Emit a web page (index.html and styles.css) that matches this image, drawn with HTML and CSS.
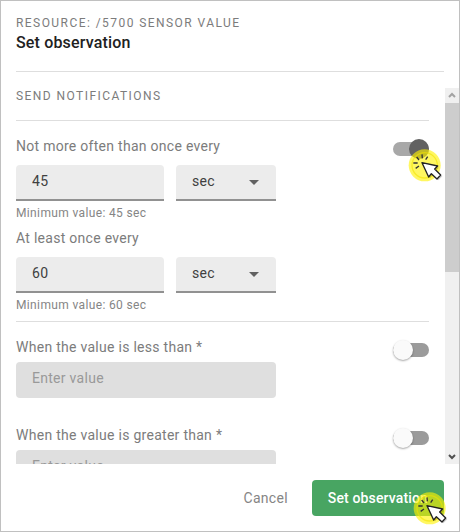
FILE: index.html
```
<!DOCTYPE html>
<html lang="en">
<head>
<meta charset="utf-8">
<meta name="viewport" content="width=device-width, initial-scale=1">
<title>Set observation</title>
<link rel="stylesheet" href="styles.css">
</head>
<body>
<svg class="symbols" aria-hidden="true">
  <symbol id="click" viewBox="21 21 120 120">
    <circle cx="74" cy="76" r="48" fill="#fff200" fill-opacity=".62"/>
    <circle cx="74" cy="76" r="38" fill="none" stroke="#f2e200" stroke-opacity=".6" stroke-width="4"/>
    <path d="M66 43l1 12M50 51l7 9M83 50l-6 9M40 69h13M47 85l10-7" fill="none" stroke="#333" stroke-width="4"/>
    <path d="M70 73L117 83L108 91L127 109L115 121L98 105L90 115Z" fill="#000" fill-opacity=".18"/>
    <path d="M66 68L113 78L104 87L122 105L111 117L94 101L86 111Z" fill="#fff" stroke="#222" stroke-width="4" stroke-linejoin="round"/>
  </symbol>
</svg>
<main class="dialog">
  <header class="header">
    <p class="overline">RESOURCE: /5700 SENSOR VALUE</p>
    <h1 class="title">Set observation</h1>
  </header>
  <div class="viewport">
    <form class="content" id="observation">
      <h2 class="overline section-title">SEND NOTIFICATIONS</h2>
      <section class="section timing">
        <div class="fields">
          <div class="group">
            <label class="label" for="min">Not more often than once every</label>
            <div class="inputs">
              <input class="control" id="min" type="text" value="45">
              <div class="select-box">
                <select class="control" aria-label="Minimum period unit"><option>sec</option><option>min</option></select>
              </div>
            </div>
            <p class="hint">Minimum value: 45 sec</p>
          </div>
          <div class="group">
            <label class="label" for="max">At least once every</label>
            <div class="inputs">
              <input class="control" id="max" type="text" value="60">
              <div class="select-box">
                <select class="control" aria-label="Maximum period unit"><option>sec</option><option>min</option></select>
              </div>
            </div>
            <p class="hint">Minimum value: 60 sec</p>
          </div>
        </div>
        <div class="toggle">
          <input class="switch" type="checkbox" checked aria-label="Limit notification frequency">
          <svg class="pointer toggle-pointer" aria-hidden="true"><use href="#click"/></svg>
        </div>
      </section>
      <section class="section conditions">
        <div class="condition">
          <div class="fields">
            <label class="label" for="less">When the value is less than *</label>
            <input class="control" id="less" type="text" placeholder="Enter value" disabled>
          </div>
          <div class="toggle"><input class="switch" type="checkbox" aria-label="Notify below value"></div>
        </div>
        <div class="condition">
          <div class="fields">
            <label class="label" for="greater">When the value is greater than *</label>
            <input class="control" id="greater" type="text" placeholder="Enter value" disabled>
          </div>
          <div class="toggle"><input class="switch" type="checkbox" aria-label="Notify above value"></div>
        </div>
      </section>
    </form>
    <div class="scrollbar" aria-hidden="true">
      <svg class="arrow up" viewBox="0 0 14 15"><path d="M4 9l3-3 3 3"/></svg>
      <div class="thumb"></div>
      <svg class="arrow down" viewBox="0 0 14 15"><path d="M4 6l3 3 3-3"/></svg>
    </div>
  </div>
  <footer class="footer">
    <button class="button cancel" type="button">Cancel</button>
    <button class="button primary" type="submit" form="observation">Set observation<svg class="pointer button-pointer" aria-hidden="true"><use href="#click"/></svg></button>
  </footer>
</main>
</body>
</html>
```
FILE: styles.css
```
* {
  box-sizing: border-box;
}

body {
  margin: 0;
  background: #fff;
  color: #7c7c7c;
  font: 14px/22px Roboto, sans-serif;
  letter-spacing: 0.02em;
}

h1, h2, p {
  margin: 0;
}

.symbols {
  position: absolute;
  width: 0;
  height: 0;
}

.dialog {
  display: flex;
  flex-direction: column;
  height: 100vh;
  border: 1px solid #c0c0c0;
}

.header {
  margin: 0 15px 16px;
  padding: 14px 0 16px;
  border-bottom: 1px solid #dedede;
}

.overline {
  font-size: 12px;
  font-weight: 400;
  line-height: 16px;
  letter-spacing: 0.12em;
}

.title {
  color: #212121;
  font-size: 16px;
  font-weight: 500;
  line-height: 24px;
  letter-spacing: 0.01em;
}

.viewport {
  display: flex;
  flex: 1;
  min-height: 0;
}

.content {
  flex: 1;
  padding: 0 16px 0 15px;
  overflow: hidden;
}

.section-title {
  padding-bottom: 16px;
}

.section {
  border-top: 1px solid #dedede;
}

.timing,
.condition {
  display: flex;
  justify-content: space-between;
}

.timing {
  padding: 14px 0 8px;
}

.conditions {
  display: grid;
  gap: 26px;
  padding: 14px 0;
}

.fields {
  width: 260px;
}

.group + .group {
  margin-top: 6px;
}

.label {
  display: block;
}

.inputs {
  display: grid;
  grid-template-columns: 1fr 100px;
  gap: 12px;
  margin: 8px 0 4px;
}

.control {
  display: block;
  width: 100%;
  height: 36px;
  padding: 0 16px 2px;
  border: 0;
  border-bottom: 2px solid #919191;
  border-radius: 4px 4px 0 0;
  background: #ececec;
  color: #404040;
  font: inherit;
  letter-spacing: inherit;
  appearance: none;
}

.control:disabled {
  margin-top: 4px;
  border-color: transparent;
  border-radius: 4px;
  background: #dfdfdf;
}

.control::placeholder {
  color: #999;
}

.select-box {
  position: relative;
}

.select-box::after {
  content: "";
  position: absolute;
  top: 15px;
  right: 17px;
  border: 5px solid transparent;
  border-top-color: #616161;
  border-bottom: 0;
  pointer-events: none;
}

.hint {
  color: #858585;
  font-size: 12px;
  line-height: 16px;
  letter-spacing: 0.03em;
}

.toggle {
  position: relative;
  padding-top: 4px;
}

.switch {
  display: block;
  position: relative;
  width: 36px;
  height: 20px;
  margin: 0;
  appearance: none;
}

.switch::before {
  content: "";
  position: absolute;
  inset: 3px 0;
  border-radius: 7px;
  background: #9b9b9b;
}

.switch::after {
  content: "";
  position: absolute;
  top: 0;
  left: 0;
  width: 20px;
  height: 20px;
  border-radius: 50%;
  background: #fafafa;
  box-shadow: 0 1px 2px rgba(0, 0, 0, 0.35);
}

.switch:checked::before {
  background: #a8a8a8;
}

.switch:checked::after {
  left: 16px;
  background: #616161;
  box-shadow: none;
}

.pointer {
  position: absolute;
  width: 40px;
  height: 40px;
  pointer-events: none;
}

.toggle-pointer {
  top: 12px;
  left: 14px;
}

.scrollbar {
  display: flex;
  flex-direction: column;
  width: 14px;
  background: #f0f0f0;
}

.arrow {
  width: 14px;
  height: 15px;
  fill: none;
  stroke: #a3a3a3;
  stroke-width: 2;
}

.down {
  margin-top: auto;
  stroke: #505050;
}

.thumb {
  height: 45%;
  background: #cdcdcd;
}

.footer {
  display: flex;
  justify-content: flex-end;
  gap: 8px;
  padding: 16px 15px 15px;
}

.button {
  position: relative;
  height: 36px;
  padding: 0 16px;
  border: 0;
  border-radius: 4px;
  background: none;
  color: #858585;
  font: inherit;
  letter-spacing: inherit;
}

.primary {
  background: #48a562;
  color: #fff;
  font-weight: 500;
  letter-spacing: 0.01em;
}

.button-pointer {
  top: 10px;
  right: -8px;
}
```
